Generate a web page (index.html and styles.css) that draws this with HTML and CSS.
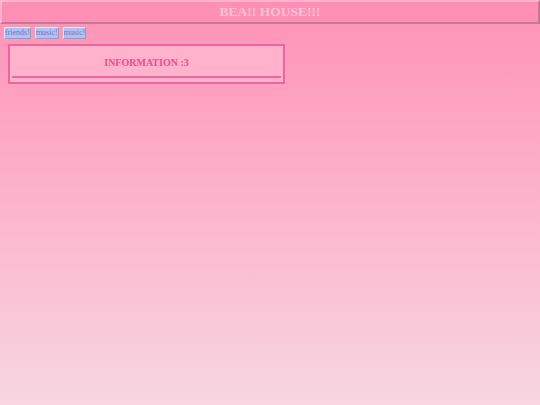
FILE: index.html
```html
<!doctype html>
<html>
    <head>
        <title>BEA!! HOUSE!!!</title>
        <link rel="stylesheet" href="styles.css">
    </head>
    <body>
        <header class="top">
            <h1>BEA!! HOUSE!!!</h1>
        </header>
        <nav class="links">
            <button type="button">friends!</button>
            <button type="button">music!</button>
            <button type="button">music!</button>
        </nav>
        <section class="info">
            <h2>INFORMATION :3</h2>
            <hr>
        </section>
    </body>
</html>
```
FILE: styles.css
```css
* {
    box-sizing: border-box;
}
html,
body {
    margin: 0;
    padding: 0;
    min-height: 100%;
}
body {
    font-family: "Liberation Serif", serif;
    background: linear-gradient(to bottom, #ff91b6, #f7d6e1);
    min-height: 100vh;
}
.top {
    height: 24px;
    background-color: #ff8fb4;
    border: 2px solid;
    border-color: #ffb3cd #c37b94 #c37b94 #ffb3cd;
    display: flex;
    align-items: center;
    justify-content: center;
}
.top h1 {
    margin: 0;
    font-size: 13.5px;
    font-weight: bold;
    color: #f8c3d6;
}
.links {
    display: flex;
    gap: 4px;
    padding: 3px 4px 0;
}
.links button {
    font-family: "Liberation Serif", serif;
    font-size: 8px;
    color: #9c5cc4;
    background-color: #a9c6f2;
    border: 1px solid;
    border-color: #d8e6fb #8aa0c8 #8aa0c8 #d8e6fb;
    padding: 0;
    height: 12px;
    line-height: 10px;
}
.info {
    margin: 5px 0 0 8px;
    width: 277px;
    height: 40px;
    background-color: #ffb2cc;
    border: 2px solid #f1639c;
    padding: 11px 2px 0;
}
.info h2 {
    margin: 0;
    text-align: center;
    font-size: 10px;
    line-height: 12px;
    color: #e5508c;
}
.info hr {
    margin: 7px 0 0;
    border: 0;
    height: 2px;
    background-color: #f1639c;
}
```
